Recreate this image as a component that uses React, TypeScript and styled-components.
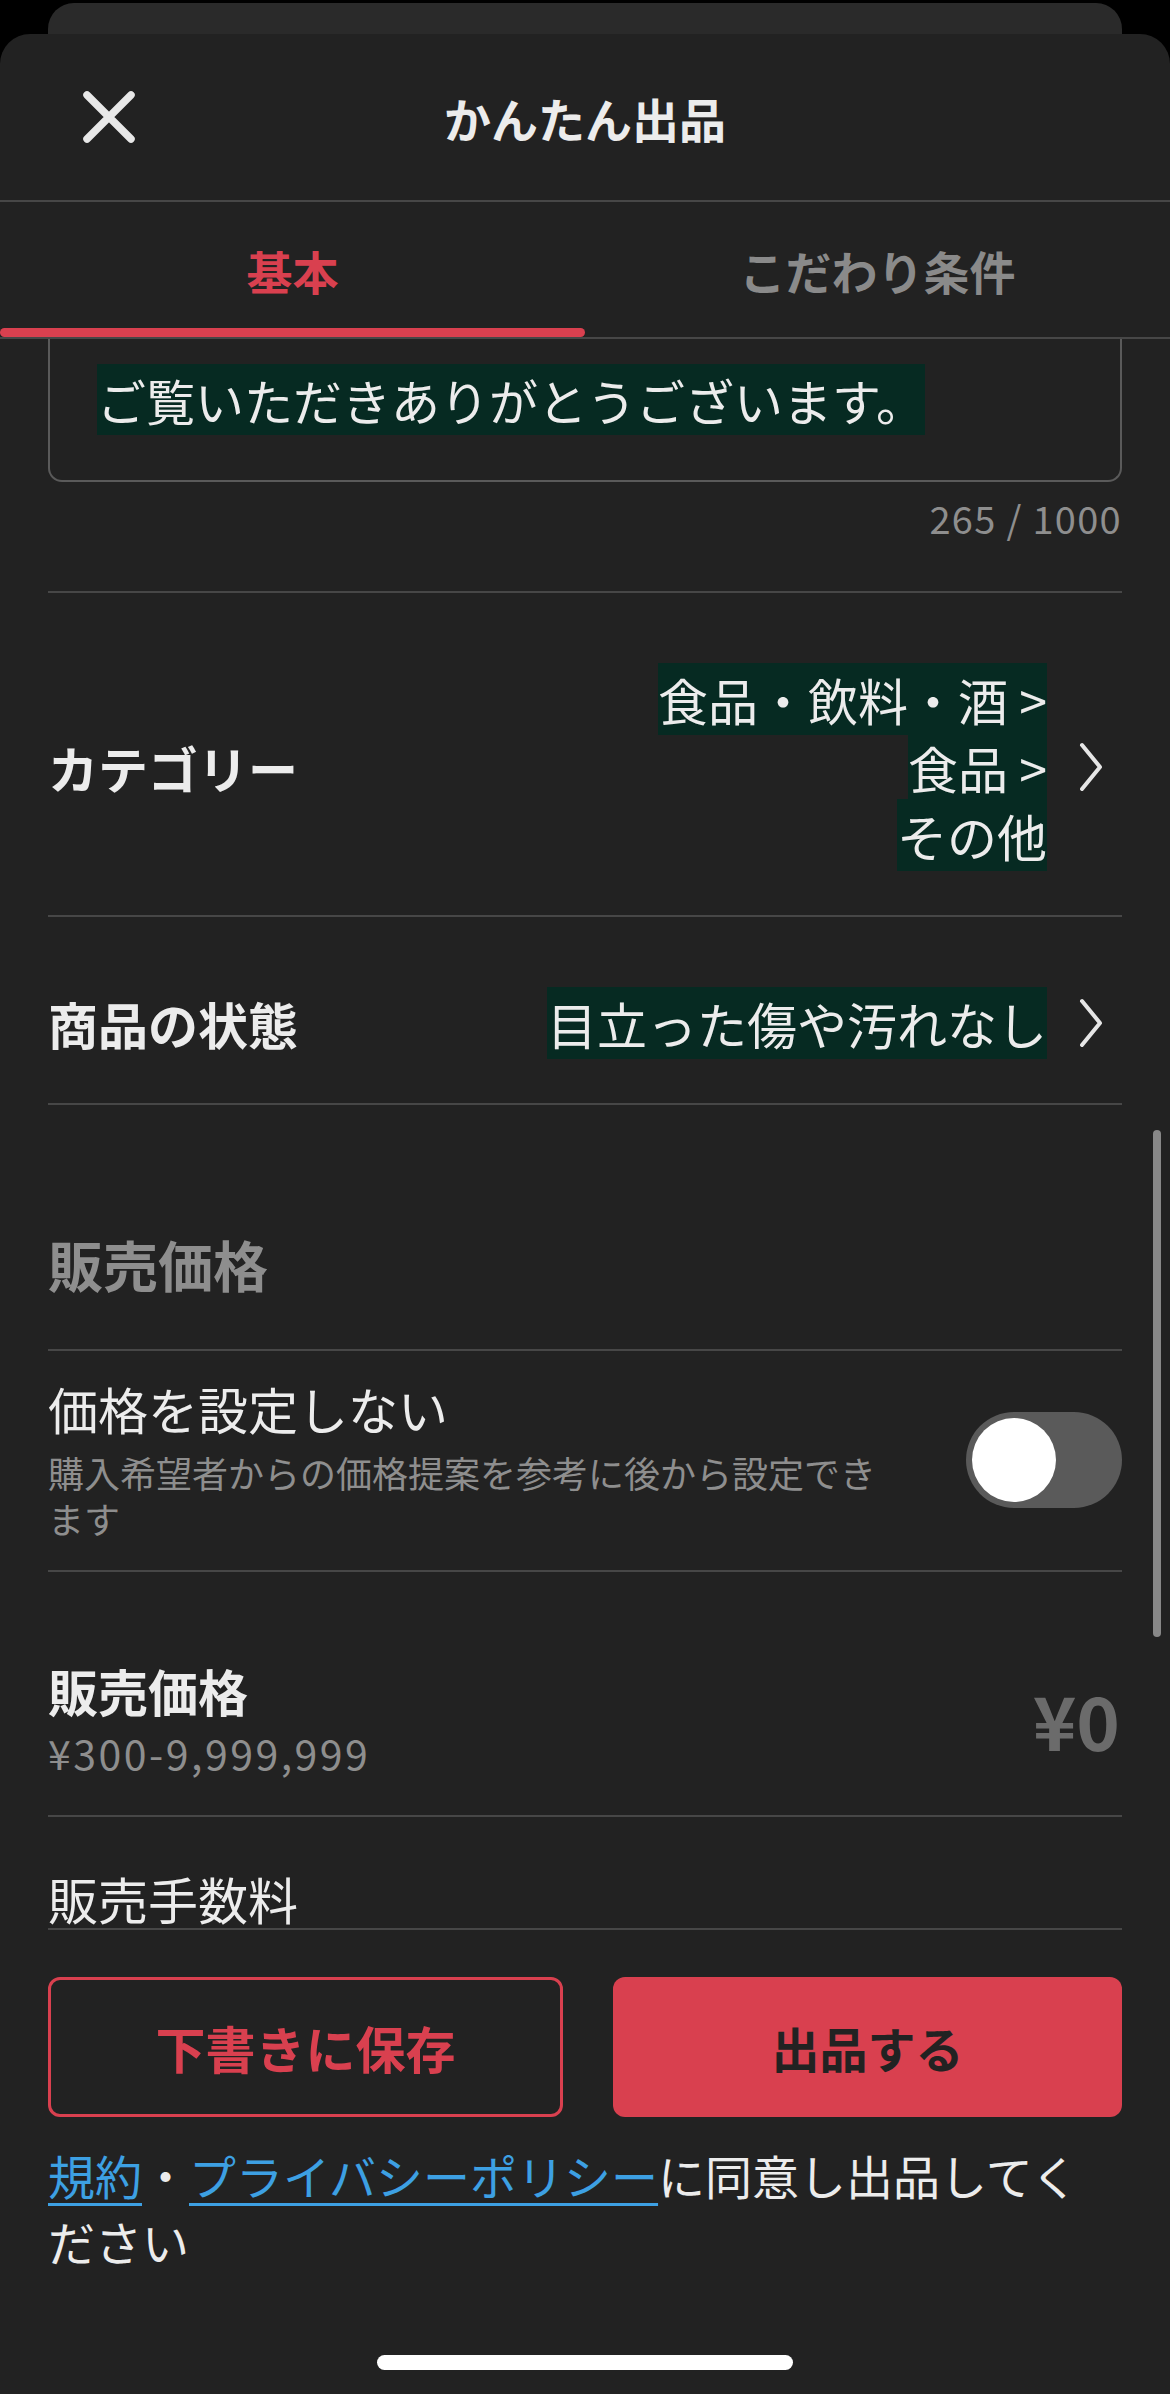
import React from "react";
import styled, { createGlobalStyle } from "styled-components";

const GlobalStyle = createGlobalStyle`
  html, body { margin: 0; padding: 0; background: #000; }
  body {
    font-family: "Noto Sans CJK JP", "Noto Sans", sans-serif;
    -webkit-font-smoothing: antialiased;
  }
  * { box-sizing: border-box; }
`;

const RED = "#d9404f";
const LINE = "#474747";
const TEXT = "#ececec";
const GRAY = "#8e8e8e";

const Screen = styled.div`
  width: 1170px;
  height: 2394px;
  background: #000;
  display: flex;
  flex-direction: column;
  overflow: hidden;
`;

const BackCard = styled.div`
  flex: none;
  height: 31px;
  margin: 3px 48px 0;
  background: #2a2a2a;
  border-radius: 26px 26px 0 0;
`;

const Sheet = styled.div`
  flex: 1;
  min-height: 0;
  display: flex;
  flex-direction: column;
  background: #222222;
  border-radius: 30px 30px 0 0;
`;

const Header = styled.header`
  flex: none;
  height: 168px;
  display: grid;
  grid-template-columns: 1fr auto 1fr;
  align-items: center;
  border-bottom: 2px solid ${LINE};
`;

const CloseButton = styled.button`
  justify-self: start;
  display: flex;
  padding: 0 0 0 82px;
  border: none;
  background: none;
  cursor: pointer;
`;

const Title = styled.h1`
  margin: 0;
  font-size: 47px;
  font-weight: 700;
  color: ${TEXT};
  line-height: 1;
`;

const Tabs = styled.nav`
  flex: none;
  height: 137px;
  display: flex;
  border-bottom: 2px solid ${LINE};
`;

const Tab = styled.div<{ $active?: boolean }>`
  flex: 1;
  position: relative;
  display: flex;
  align-items: center;
  justify-content: center;
  font-size: 46px;
  font-weight: 700;
  color: ${(p) => (p.$active ? RED : "#8a8a8a")};
  &::after {
    content: "";
    display: ${(p) => (p.$active ? "block" : "none")};
    position: absolute;
    left: 0;
    right: 0;
    bottom: 0;
    height: 9px;
    border-radius: 5px;
    background: ${RED};
  }
`;

const Viewport = styled.div`
  flex: none;
  height: 1589px;
  overflow: hidden;
  position: relative;
`;

const Content = styled.div`
  padding: 0 48px;
`;

const DescBox = styled.div`
  border: 2px solid #5a5a5a;
  border-top: none;
  border-radius: 0 0 14px 14px;
  padding: 27px 30px 46px 47px;
  font-size: 49px;
  line-height: 68px;
  color: ${TEXT};
`;

const Mark = styled.span`
  background: #062a22;
  -webkit-box-decoration-break: clone;
  box-decoration-break: clone;
`;

const Counter = styled.div`
  margin-top: 12px;
  padding-bottom: 49px;
  text-align: right;
  font-size: 38px;
  line-height: 48px;
  letter-spacing: 1.3px;
  color: ${GRAY};
`;

const Divider = styled.div`
  height: 2px;
  background: ${LINE};
`;

const NavRow = styled.div`
  display: flex;
  align-items: center;
  justify-content: space-between;
  gap: 24px;
  padding: 72px 0 46px;
`;

const Label = styled.div<{ $bold?: boolean }>`
  font-size: 50px;
  line-height: 68px;
  font-weight: ${(p) => (p.$bold ? 700 : 400)};
  color: ${TEXT};
  white-space: nowrap;
`;

const ValueGroup = styled.div`
  display: flex;
  align-items: center;
  gap: 32px;
  padding-right: 19px;
`;

const Value = styled.div`
  text-align: right;
  font-size: 50px;
  line-height: 68px;
  color: ${TEXT};
`;

const SectionHeading = styled.h2`
  margin: 0;
  padding: 123px 0 51px;
  font-size: 55px;
  line-height: 70px;
  font-weight: 700;
  color: ${GRAY};
`;

const ToggleRow = styled.div`
  display: flex;
  align-items: center;
  justify-content: space-between;
  padding: 27px 0 29px;
`;

const TextColumn = styled.div`
  display: flex;
  flex-direction: column;
  max-width: 850px;
`;

const RowTitle = styled.div<{ $bold?: boolean }>`
  font-size: 50px;
  line-height: 60px;
  font-weight: ${(p) => (p.$bold ? 700 : 400)};
  color: ${TEXT};
`;

const SubText = styled.div<{ $gap: number; $lh: number; $size: number; $track?: number }>`
  margin-top: ${(p) => p.$gap}px;
  font-size: ${(p) => p.$size}px;
  line-height: ${(p) => p.$lh}px;
  letter-spacing: ${(p) => p.$track ?? 0}px;
  color: ${GRAY};
`;

const Switch = styled.div`
  flex: none;
  width: 156px;
  height: 96px;
  padding: 6px;
  border-radius: 48px;
  background: #5a5a5a;
  display: flex;
  align-items: center;
`;

const Knob = styled.div`
  width: 84px;
  height: 84px;
  border-radius: 50%;
  background: #fff;
`;

const PriceRow = styled.div`
  display: flex;
  align-items: center;
  justify-content: space-between;
  padding: 88px 0 38px;
`;

const PriceValue = styled.div`
  font-size: 74px;
  line-height: 1;
  font-weight: 700;
  color: #6b6b6b;
  margin-right: 2px;
`;

const FeeRow = styled.div`
  padding-top: 51px;
`;

const ScrollThumb = styled.div`
  position: absolute;
  top: 791px;
  right: 9px;
  width: 8px;
  height: 507px;
  border-radius: 4px;
  background: #888;
`;

const Footer = styled.footer`
  flex: 1;
  padding: 0 48px;
  display: flex;
  flex-direction: column;
`;

const Buttons = styled.div`
  margin-top: 47px;
  display: flex;
  gap: 50px;
`;

const ActionButton = styled.button<{ $primary?: boolean }>`
  flex: 1;
  height: 140px;
  border-radius: 12px;
  font-family: inherit;
  font-weight: 700;
  font-size: ${(p) => (p.$primary ? 48 : 50)}px;
  color: ${(p) => (p.$primary ? "#222" : RED)};
  background: ${(p) => (p.$primary ? RED : "transparent")};
  border: ${(p) => (p.$primary ? "none" : `3px solid ${RED}`)};
  cursor: pointer;
`;

const Terms = styled.p`
  margin: 25px 0 0;
  font-size: 47px;
  line-height: 66px;
  color: ${TEXT};
`;

const Link = styled.a`
  color: #3da0e3;
  text-decoration: underline;
  text-decoration-thickness: 3px;
  text-underline-offset: 8px;
`;

const HomeIndicator = styled.div`
  margin: 81px auto 0;
  width: 416px;
  height: 15px;
  border-radius: 8px;
  background: #fff;
`;

const CloseIcon = () => (
  <svg width="54" height="54" viewBox="0 0 54 54" fill="none">
    <path d="M5 5 L49 49 M49 5 L5 49" stroke="#e8e8e8" strokeWidth="7.5" strokeLinecap="round" />
  </svg>
);

const Chevron = () => (
  <svg width="24" height="50" viewBox="0 0 24 50" fill="none">
    <polyline points="3,3 21,25 3,47" stroke="#e6e6e6" strokeWidth="4" strokeLinecap="round" strokeLinejoin="round" />
  </svg>
);

export default function App() {
  return (
    <>
      <GlobalStyle />
      <Screen>
        <BackCard />
        <Sheet>
          <Header>
            <CloseButton aria-label="閉じる">
              <CloseIcon />
            </CloseButton>
            <Title>かんたん出品</Title>
            <div />
          </Header>
          <Tabs>
            <Tab $active>基本</Tab>
            <Tab>こだわり条件</Tab>
          </Tabs>
          <Viewport>
            <Content>
              <DescBox>
                <Mark>ご覧いただきありがとうございます。</Mark>
              </DescBox>
              <Counter>265 / 1000</Counter>
              <Divider />
              <NavRow>
                <Label $bold>カテゴリー</Label>
                <ValueGroup>
                  <Value>
                    <Mark>
                      食品・飲料・酒 &gt;
                      <br />
                      食品 &gt;
                      <br />
                      その他
                    </Mark>
                  </Value>
                  <Chevron />
                </ValueGroup>
              </NavRow>
              <Divider />
              <NavRow>
                <Label $bold>商品の状態</Label>
                <ValueGroup>
                  <Value>
                    <Mark>目立った傷や汚れなし</Mark>
                  </Value>
                  <Chevron />
                </ValueGroup>
              </NavRow>
              <Divider />
              <SectionHeading>販売価格</SectionHeading>
              <Divider />
              <ToggleRow>
                <TextColumn>
                  <RowTitle>価格を設定しない</RowTitle>
                  <SubText $gap={11} $lh={46} $size={36}>
                    購入希望者からの価格提案を参考に後から設定できます
                  </SubText>
                </TextColumn>
                <Switch>
                  <Knob />
                </Switch>
              </ToggleRow>
              <Divider />
              <PriceRow>
                <TextColumn>
                  <RowTitle $bold>販売価格</RowTitle>
                  <SubText $gap={7} $lh={50} $size={41} $track={2.5}>
                    ¥300-9,999,999
                  </SubText>
                </TextColumn>
                <PriceValue>¥0</PriceValue>
              </PriceRow>
              <Divider />
              <FeeRow>
                <RowTitle>販売手数料</RowTitle>
              </FeeRow>
            </Content>
            <ScrollThumb />
          </Viewport>
          <Footer>
            <Divider />
            <Buttons>
              <ActionButton>下書きに保存</ActionButton>
              <ActionButton $primary>出品する</ActionButton>
            </Buttons>
            <Terms>
              <Link href="#">規約</Link>・<Link href="#">プライバシーポリシー</Link>
              に同意し出品してください
            </Terms>
            <HomeIndicator />
          </Footer>
        </Sheet>
      </Screen>
    </>
  );
}
